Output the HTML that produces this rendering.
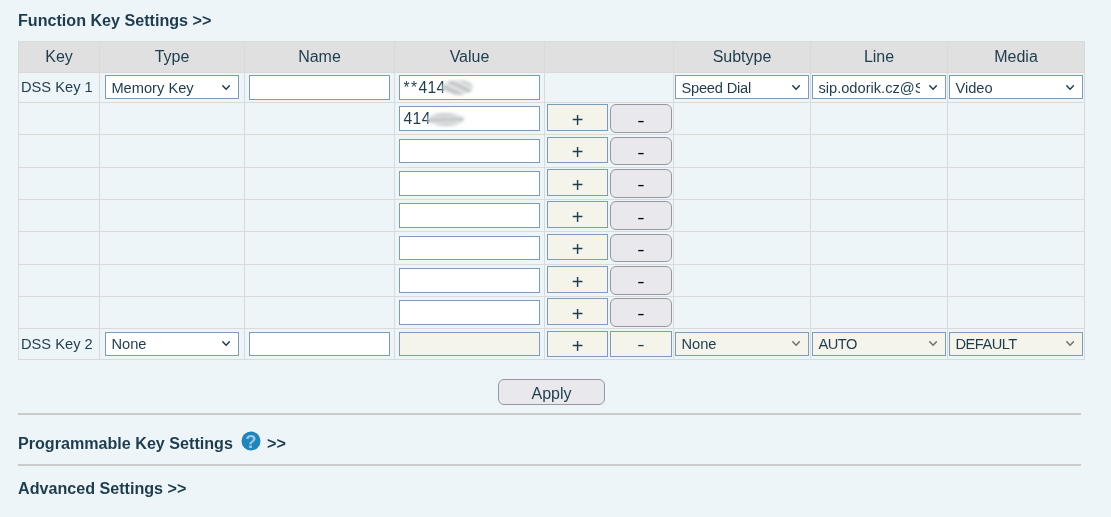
<!DOCTYPE html>
<html><head><meta charset="utf-8"><title>Function Key Settings</title>
<style>
html,body{margin:0;padding:0;}
body{width:1111px;height:517px;overflow:hidden;background:#eef5f8;font-family:"Liberation Sans",sans-serif;color:#1d3c4d;position:relative;}
#page{left:0;top:0;width:1111px;height:517px;will-change:transform;}
div,span{position:absolute;box-sizing:border-box;white-space:nowrap;}
.h3{left:18px;font-size:16.13px;font-weight:bold;line-height:20px;height:20px;}
.hl{left:18px;width:1067px;height:1px;background:#dadada;}
.vl{top:41px;width:1px;height:319px;background:#dadada;}
.thbg{left:18px;top:41px;width:1067px;height:32px;background:#e0e0e0;}
.th{top:41px;height:32px;line-height:32px;font-size:16px;text-align:center;}
.k{left:21px;font-size:14.67px;line-height:20px;height:20px;}
.in{border:1px solid #7a9cbd;background:#fff;font-size:14.67px;padding-left:6px;overflow:hidden;}
.st{left:5.4px;top:0;width:102px;height:22px;overflow:hidden;line-height:25px;}
.sel{height:24px;line-height:22px;width:134px;}
.txt{height:25px;line-height:24px;width:141px;padding-left:3.5px;font-size:15.6px;letter-spacing:0.4px;}
.dis{background:#f4f4ea;}
.plus{border:1px solid #7a9cbd;background:#f4f4ea;width:61px;height:27px;text-align:center;font-size:20px;line-height:25px;}
.btn{border:1px solid #9797a3;background:#e9e9ed;border-radius:6px;text-align:center;}
.dash{position:static;display:inline-block;transform:scaleX(1.3);}
.minus{width:62px;height:29px;font-size:17px;line-height:29px;color:#000;}
.hr{left:18px;width:1063px;height:2px;background:linear-gradient(#cecece,#c8c7c7);}
.chev{right:8px;top:9.2px;width:8.2px;height:5.4px;}
.blur{border-radius:50%;filter:blur(1.6px);}
</style></head><body><div id="page">

<div class="h3" style="top:10px">Function Key Settings &gt;&gt;</div>
<div class="thbg"></div>
<div class="hl" style="top:41px"></div>
<div class="hl" style="top:72px"></div>
<div class="hl" style="top:102px"></div>
<div class="hl" style="top:134px"></div>
<div class="hl" style="top:167px"></div>
<div class="hl" style="top:199px"></div>
<div class="hl" style="top:231px"></div>
<div class="hl" style="top:264px"></div>
<div class="hl" style="top:296px"></div>
<div class="hl" style="top:328px"></div>
<div class="hl" style="top:359px"></div>
<div class="vl" style="left:18px"></div>
<div class="vl" style="left:99px"></div>
<div class="vl" style="left:244px"></div>
<div class="vl" style="left:394px"></div>
<div class="vl" style="left:544px"></div>
<div class="vl" style="left:673px"></div>
<div class="vl" style="left:810px"></div>
<div class="vl" style="left:947px"></div>
<div class="vl" style="left:1084px"></div>
<div class="th" style="left:18px;width:82px">Key</div>
<div class="th" style="left:99px;width:146px">Type</div>
<div class="th" style="left:244px;width:151px">Name</div>
<div class="th" style="left:394px;width:151px">Value</div>
<div class="th" style="left:673px;width:138px">Subtype</div>
<div class="th" style="left:810px;width:138px">Line</div>
<div class="th" style="left:947px;width:138px">Media</div>
<div class="k" style="top:77px">DSS Key 1</div>
<div class="in sel" style="left:105px;top:75px"><span class="st" style="letter-spacing:0px;top:0px">Memory Key</span><svg class="chev" viewBox="0 0 8.2 5.4" style="position:absolute"><path d="M0.8 0.8 L4.1 4.3 L7.4 0.8" fill="none" stroke="#1d3c4d" stroke-width="1.45" stroke-linecap="round" stroke-linejoin="round"/></svg></div>
<div class="in txt" style="left:249px;top:75px"></div>
<div class="in txt" style="left:399px;top:75px"><span style="position:static;letter-spacing:1.4px">**</span>414<span class="blur" style="left:42px;top:4px;width:31px;height:15px;background:repeating-linear-gradient(25deg,#b9bdbf 0,#c9cdcf 3px,#f4f5f5 5px,#c3c7c9 7px)"></span></div>
<div class="in sel" style="left:675px;top:75px"><span class="st" style="letter-spacing:-0.2px;top:0px">Speed Dial</span><svg class="chev" viewBox="0 0 8.2 5.4" style="position:absolute"><path d="M0.8 0.8 L4.1 4.3 L7.4 0.8" fill="none" stroke="#1d3c4d" stroke-width="1.45" stroke-linecap="round" stroke-linejoin="round"/></svg></div>
<div class="in sel" style="left:812px;top:75px"><span class="st" style="letter-spacing:0px;top:0px">sip.odorik.cz@S</span><svg class="chev" viewBox="0 0 8.2 5.4" style="position:absolute"><path d="M0.8 0.8 L4.1 4.3 L7.4 0.8" fill="none" stroke="#1d3c4d" stroke-width="1.45" stroke-linecap="round" stroke-linejoin="round"/></svg></div>
<div class="in sel" style="left:949px;top:75px"><span class="st" style="letter-spacing:0px;top:0px">Video</span><svg class="chev" viewBox="0 0 8.2 5.4" style="position:absolute"><path d="M0.8 0.8 L4.1 4.3 L7.4 0.8" fill="none" stroke="#1d3c4d" stroke-width="1.45" stroke-linecap="round" stroke-linejoin="round"/></svg></div>
<div class="in txt" style="left:399px;top:106px">414<span class="blur" style="left:27px;top:6px;width:37px;height:13px;background:repeating-linear-gradient(178deg,#bcc0c2 0,#c9cdcf 3px,#f2f3f3 4.5px,#c3c7c9 6px)"></span></div>
<div class="plus" style="left:547px;top:104px;height:27px;line-height:30px">+</div>
<div class="btn minus" style="left:610px;top:104px;height:29px;line-height:29px"><span class="dash" style="transform:translateY(1px) scaleX(1.3)">-</span></div>
<div class="in txt" style="left:399px;top:139px;height:24px"></div>
<div class="plus" style="left:547px;top:137px;height:26px;line-height:29px">+</div>
<div class="btn minus" style="left:610px;top:137px;height:28px;line-height:28px"><span class="dash" style="transform:translateY(1px) scaleX(1.3)">-</span></div>
<div class="in txt" style="left:399px;top:171px;height:25px"></div>
<div class="plus" style="left:547px;top:169px;height:27px;line-height:30px">+</div>
<div class="btn minus" style="left:610px;top:169px;height:29px;line-height:29px"><span class="dash" style="transform:translateY(0px) scaleX(1.3)">-</span></div>
<div class="in txt" style="left:399px;top:203px;height:25px"></div>
<div class="plus" style="left:547px;top:201px;height:27px;line-height:30px">+</div>
<div class="btn minus" style="left:610px;top:201px;height:29px;line-height:29px"><span class="dash" style="transform:translateY(1px) scaleX(1.3)">-</span></div>
<div class="in txt" style="left:399px;top:236px;height:24px"></div>
<div class="plus" style="left:547px;top:234px;height:26px;line-height:29px">+</div>
<div class="btn minus" style="left:610px;top:234px;height:28px;line-height:28px"><span class="dash" style="transform:translateY(1px) scaleX(1.3)">-</span></div>
<div class="in txt" style="left:399px;top:268px;height:25px"></div>
<div class="plus" style="left:547px;top:266px;height:27px;line-height:30px">+</div>
<div class="btn minus" style="left:610px;top:266px;height:29px;line-height:29px"><span class="dash" style="transform:translateY(0px) scaleX(1.3)">-</span></div>
<div class="in txt" style="left:399px;top:300px;height:25px"></div>
<div class="plus" style="left:547px;top:298px;height:27px;line-height:30px">+</div>
<div class="btn minus" style="left:610px;top:298px;height:29px;line-height:29px"><span class="dash" style="transform:translateY(0px) scaleX(1.3)">-</span></div>
<div class="k" style="top:334px">DSS Key 2</div>
<div class="in sel" style="left:105px;top:332px"><span class="st" style="letter-spacing:0px;top:-1px">None</span><svg class="chev" viewBox="0 0 8.2 5.4" style="position:absolute;top:8.4px"><path d="M0.8 0.8 L4.1 4.3 L7.4 0.8" fill="none" stroke="#1d3c4d" stroke-width="1.45" stroke-linecap="round" stroke-linejoin="round"/></svg></div>
<div class="in txt" style="left:249px;top:332px;height:24px"></div>
<div class="in txt dis" style="left:399px;top:332px;height:24px"></div>
<div class="plus" style="left:547px;top:331px;height:26px;line-height:29px">+</div>
<div class="plus" style="left:610px;top:331px;height:26px;line-height:26px;width:62px;font-size:17px"><span class="dash">-</span></div>
<div class="in sel dis" style="left:675px;top:332px"><span class="st" style="letter-spacing:0px;top:-1px">None</span><svg class="chev" viewBox="0 0 8.2 5.4" style="position:absolute;top:8.4px"><path d="M0.8 0.8 L4.1 4.3 L7.4 0.8" fill="none" stroke="#6e6e6e" stroke-width="1.45" stroke-linecap="round" stroke-linejoin="round"/></svg></div>
<div class="in sel dis" style="left:812px;top:332px"><span class="st" style="letter-spacing:-0.5px;top:-1px">AUTO</span><svg class="chev" viewBox="0 0 8.2 5.4" style="position:absolute;top:8.4px"><path d="M0.8 0.8 L4.1 4.3 L7.4 0.8" fill="none" stroke="#6e6e6e" stroke-width="1.45" stroke-linecap="round" stroke-linejoin="round"/></svg></div>
<div class="in sel dis" style="left:949px;top:332px"><span class="st" style="letter-spacing:-0.5px;top:-1px">DEFAULT</span><svg class="chev" viewBox="0 0 8.2 5.4" style="position:absolute;top:8.4px"><path d="M0.8 0.8 L4.1 4.3 L7.4 0.8" fill="none" stroke="#6e6e6e" stroke-width="1.45" stroke-linecap="round" stroke-linejoin="round"/></svg></div>
<div class="btn" style="left:498px;top:379px;width:107px;height:26px;font-size:16px;line-height:27px;color:#1d3c4d">Apply</div>
<div class="hr" style="top:413px"></div>
<div class="h3" style="top:433px">Programmable Key Settings</div>
<svg style="position:absolute;left:241px;top:431px" width="20" height="20" viewBox="0 0 20 20"><circle cx="10" cy="10" r="9.5" fill="#1e86bc"/><text x="10" y="16.6" text-anchor="middle" font-family="Liberation Sans, sans-serif" font-size="18.5" font-weight="bold" fill="#ffffff" fill-opacity="0.55">?</text></svg>
<div class="h3" style="top:433px;left:267px">&gt;&gt;</div>
<div class="hr" style="top:464px"></div>
<div class="h3" style="top:478px">Advanced Settings &gt;&gt;</div>
</div></body></html>
